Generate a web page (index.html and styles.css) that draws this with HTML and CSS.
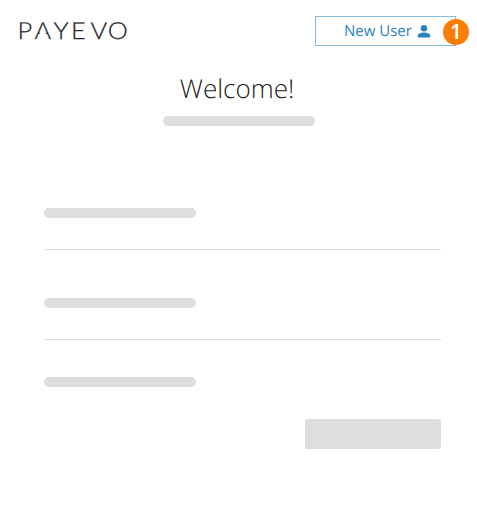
FILE: index.html
```html
<!DOCTYPE html>
<html lang="en">
<head>
<meta charset="utf-8">
<title>Payevo</title>
<link rel="stylesheet" href="styles.css">
</head>
<body>
<header class="topbar">
  <svg class="logo" width="124" height="40" viewBox="0 -8 124 40">
    <text class="wordmark" x=".5 16.25 33.7 50 68 84" y="21">PAYEVO</text>
    <path class="cut" d="M25.8 7.7 L30.1 18.8 H21.5 Z"/>
  </svg>
  <a class="new-user">
    <span class="label">New User</span>
    <svg class="person" width="14" height="13" viewBox="0 0 14 13"><circle cx="7" cy="3.3" r="3.2"/><path d="M.8 12.4V10.8C.8 8.7 4.2 7.6 7 7.6s6.2 1.1 6.2 3.2v1.6z"/></svg>
    <span class="badge">1</span>
  </a>
</header>
<main>
  <h1>Welcome!</h1>
  <div class="bar subtitle"></div>
  <form class="form">
    <div class="field"><div class="bar"></div></div>
    <div class="field"><div class="bar"></div></div>
    <div class="bar"></div>
    <div class="submit"></div>
  </form>
</main>
</body>
</html>
```
FILE: styles.css
```css
body {
  margin: 0;
  background: #fff;
  font-family: "Open Sans", sans-serif;
  text-rendering: geometricPrecision;
}
.topbar {
  display: flex;
  justify-content: space-between;
  height: 30px;
  padding: 16px 21px 0 17px;
}
.logo {
  margin-top: -6px;
}
.wordmark {
  font-family: Lato, sans-serif;
  font-weight: 300;
  font-size: 23.5px;
  fill: #29292b;
  stroke: #29292b;
  stroke-width: 0.25px;
  transform: scaleX(1.08);
}
.cut {
  fill: #fff;
}
.new-user {
  position: relative;
  box-sizing: border-box;
  display: flex;
  align-items: center;
  gap: 5px;
  width: 141px;
  height: 30px;
  padding-left: 28px;
  border: 1px solid #8dbbdc;
  color: #2b83c0;
  font-size: 15px;
  line-height: 28px;
}
.person {
  fill: #2b83c0;
}
.badge {
  position: absolute;
  top: 2px;
  right: -14px;
  width: 26px;
  height: 26px;
  border-radius: 50%;
  background: #fc7d05;
  color: #fff;
  font-size: 21px;
  font-weight: 600;
  line-height: 26px;
  text-align: center;
}
h1 {
  margin: 24px 0 10px;
  padding-right: 3px;
  color: #222;
  font-size: 26px;
  font-weight: 300;
  line-height: 36px;
  text-align: center;
}
.bar {
  width: 152px;
  height: 10px;
  border-radius: 5px;
  background: #dedede;
}
.subtitle {
  margin: 0 auto;
}
.form {
  width: 397px;
  margin: 82px 0 0 44px;
}
.field {
  height: 41px;
  margin-bottom: 48px;
  border-bottom: 1px solid #dedede;
}
.field + .field {
  margin-bottom: 37px;
}
.submit {
  width: 136px;
  height: 30px;
  margin: 32px 0 0 auto;
  border-radius: 2px;
  background: #dedede;
}
```
